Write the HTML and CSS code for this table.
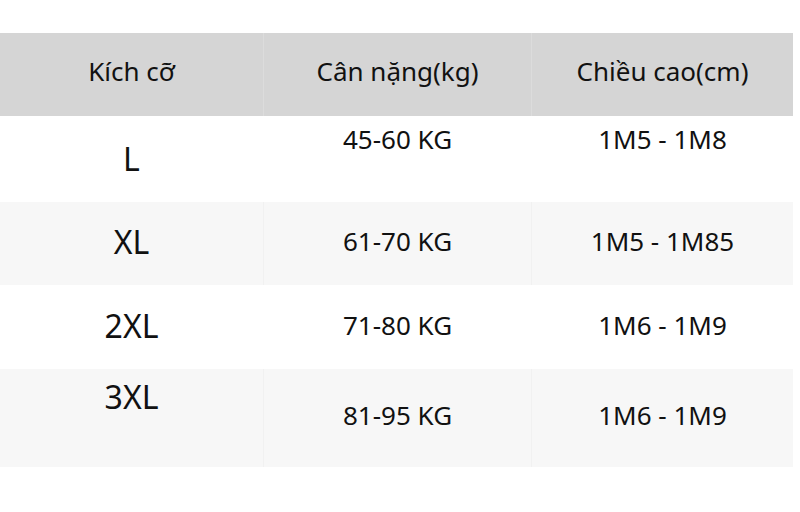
FILE: index.html
```html
<!DOCTYPE html>
<html lang="vi">
<head>
<meta charset="utf-8">
<link rel="stylesheet" href="styles.css">
</head>
<body>
<table class="size-table">
  <thead>
    <tr class="head-row">
      <th>Kích cỡ</th>
      <th>Cân nặng(kg)</th>
      <th>Chiều cao(cm)</th>
    </tr>
  </thead>
  <tbody>
    <tr class="row row-1">
      <td class="size">L</td>
      <td class="val top">45-60 KG</td>
      <td class="val top">1M5 - 1M8</td>
    </tr>
    <tr class="row row-2 alt">
      <td class="size">XL</td>
      <td class="val">61-70 KG</td>
      <td class="val">1M5 - 1M85</td>
    </tr>
    <tr class="row row-3">
      <td class="size">2XL</td>
      <td class="val">71-80 KG</td>
      <td class="val">1M6 - 1M9</td>
    </tr>
    <tr class="row row-4 alt">
      <td class="size top">3XL</td>
      <td class="val">81-95 KG</td>
      <td class="val">1M6 - 1M9</td>
    </tr>
  </tbody>
</table>
</body>
</html>
```

FILE: styles.css
```css
html, body {
  margin: 0;
  padding: 0;
  background: #ffffff;
}

body {
  font-family: "Noto Sans", "Open Sans", sans-serif;
  color: #111111;
}

.size-table {
  margin-top: 33px;
  width: 793px;
  border-collapse: collapse;
  table-layout: fixed;
}

.size-table th,
.size-table td {
  padding: 0;
  text-align: center;
  vertical-align: middle;
  border-left: 1px solid transparent;
  line-height: 1.3;
}

.size-table th:first-child,
.size-table td:first-child {
  border-left: none;
}

.size-table th:nth-child(1),
.size-table td:nth-child(1) { width: 263px; }
.size-table th:nth-child(2),
.size-table td:nth-child(2) { width: 267px; }

.head-row {
  background: #d5d5d5;
  height: 83px;
}

.head-row th {
  font-weight: 400;
  font-size: 26px;
  padding-bottom: 5px;
  border-left-color: #dcdcdc;
}

.row td {
  font-size: 26px;
}

.row td.size {
  font-size: 32px;
}

.row-2 td,
.row-3 td {
  padding-bottom: 3px;
}

.alt {
  background: #f7f7f7;
}

.alt td {
  border-left-color: #f1f1f1;
}

.row-1 { height: 86px; }
.row-2 { height: 83px; }
.row-3 { height: 84px; }
.row-4 { height: 98px; }

.row td.val.top {
  vertical-align: top;
  padding-top: 7px;
}

.row td.size.top {
  vertical-align: top;
  padding-top: 7px;
}

.row-4 td.val {
  padding-bottom: 5px;
}
```
